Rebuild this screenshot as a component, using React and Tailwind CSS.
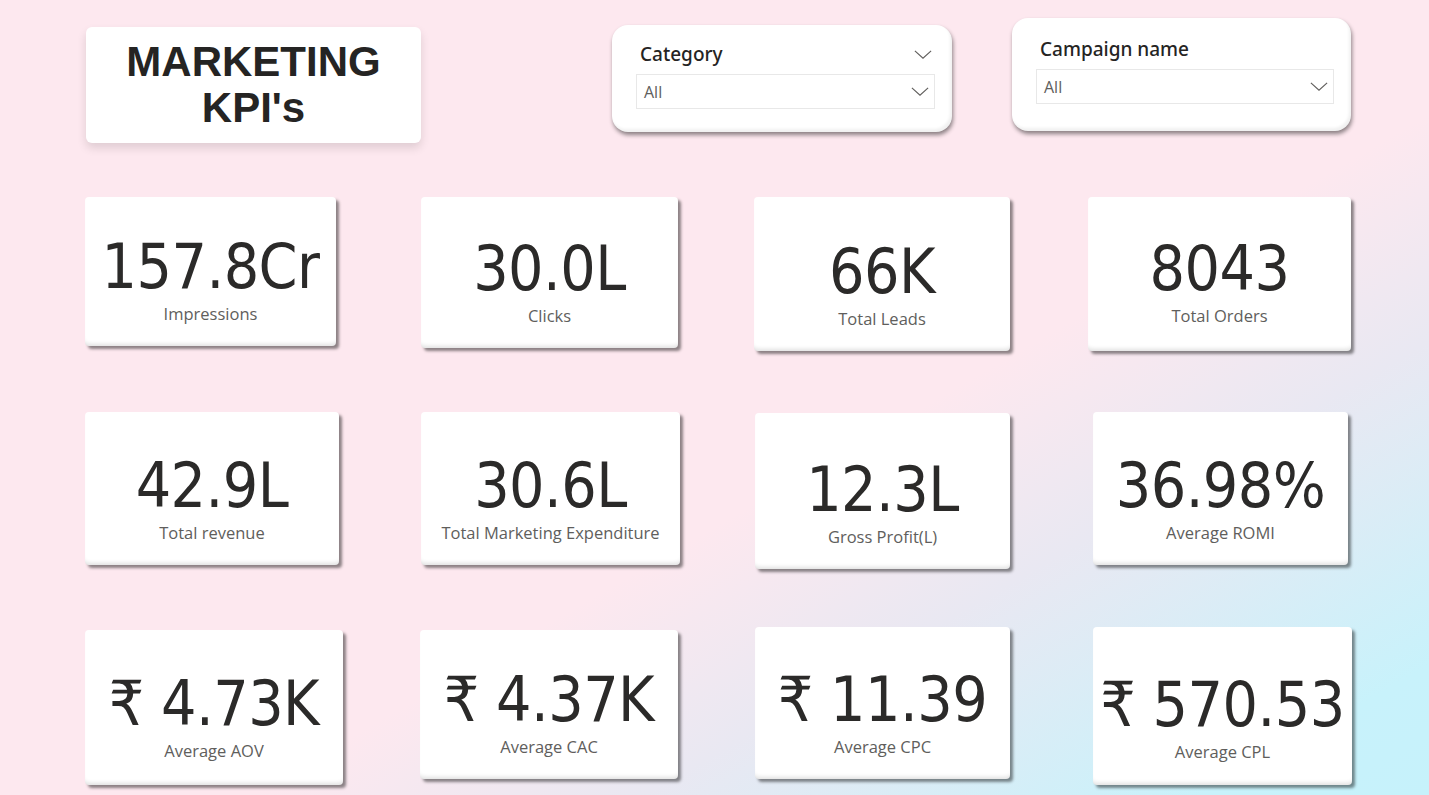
import React from 'react';

const valueFont = { fontFamily: "'DejaVu Sans Condensed', 'Liberation Sans Narrow', Roboto, sans-serif" };

// KPI cards, laid out by row. Offsets copied off the canvas so cards sit where the report has them.
const rows = [
    [
        { value: '157.8Cr', label: 'Impressions', box: 'w-[251px] h-[149px]', pad: 'pt-[39px]' },
        { value: '30.0L', label: 'Clicks', box: 'ml-[1px] w-[257px] h-[151px]', pad: 'pt-[41px]' },
        { value: '66K', label: 'Total Leads', box: 'w-[256px] h-[154px]', pad: 'pt-[44px]' },
        { value: '8043', label: 'Total Orders', box: 'ml-[1px] w-[263px] h-[154px]', pad: 'pt-[41px]' },
    ],
    [
        { value: '42.9L', label: 'Total revenue', box: 'w-[254px] h-[153px]', pad: 'pt-[43px]' },
        { value: '30.6L', label: 'Total Marketing Expenditure', box: 'ml-[1px] w-[259px] h-[153px]', pad: 'pt-[43px]' },
        { value: '12.3L', label: 'Gross Profit(L)', box: 'ml-[1px] mt-[1px] w-[255px] h-[156px]', pad: 'pt-[46px]' },
        { value: '36.98%', label: 'Average ROMI', box: 'ml-[6px] w-[255px] h-[153px]', pad: 'pt-[43px]' },
    ],
    [
        { value: '₹ 4.73K', label: 'Average AOV', box: 'mt-[3px] w-[258px] h-[155px]', pad: 'pt-[43px]' },
        { value: '₹ 4.37K', label: 'Average CAC', box: 'mt-[3px] w-[258px] h-[149px]', pad: 'pt-[39px]' },
        { value: '₹ 11.39', label: 'Average CPC', box: 'ml-[1px] w-[255px] h-[152px]', pad: 'pt-[42px]' },
        { value: '₹ 570.53', label: 'Average CPL', box: 'ml-[6px] w-[259px] h-[158px]', pad: 'pt-[47px]' },
    ],
];

const Chevron = ({ className }) => (
    <svg viewBox="0 0 20 10" className={className} fill="none" stroke="#605e5c" strokeWidth="1.3">
        <polyline points="1,1 10,9 19,1" />
    </svg>
);

const KpiCard = ({ value, label, box, pad }) => (
    <div className={`${box} ${pad} bg-white rounded-[4px] shadow-[3px_3px_3px_rgba(0,0,0,0.45),inset_0_-5px_4px_-3px_rgba(0,0,0,0.12)] flex flex-col items-center`}>
        <div style={valueFont} className="text-[62px] leading-[62px] text-[#2b2a29] tracking-[-0.5px] whitespace-nowrap">{value}</div>
        <div className="font-['Open_Sans',sans-serif] text-[16.5px] leading-[22px] text-[#605e5c] mt-[5px] whitespace-nowrap">{label}</div>
    </div>
);

const Slicer = ({ title, showTopChevron, box }) => (
    <div className={`${box} bg-white rounded-[16px] shadow-[1px_3px_4px_rgba(0,0,0,0.45),inset_-2px_-3px_3px_rgba(0,0,0,0.06)] pl-[24px] pr-[17px]`}>
        <div className="flex items-center justify-between pl-[4px] pr-[3px]">
            <span className="font-['Noto_Sans',sans-serif] font-medium text-[19px] leading-[28px] text-[#252423]">{title}</span>
            {showTopChevron && <Chevron className="w-[18px] h-[9px]" />}
        </div>
        <div className="mt-[6px] h-[35px] border border-[#e8e8e8] flex items-center justify-between pl-[7px] pr-[5px]">
            <span className="font-['Open_Sans',sans-serif] text-[16px] text-[#605e5c]">All</span>
            <Chevron className="w-[18px] h-[9px]" />
        </div>
    </div>
);

export default function App() {
    return (
        <div className="w-full h-[795px] overflow-hidden bg-[linear-gradient(150deg,#fde8ef_0%,#fde8ef_58%,#e9e8f2_72%,#c8f2fb_92%,#c6f2fb_100%)]">
            {/* header: title + slicers */}
            <div className="flex items-start pl-[86px]">
                <div className="mt-[27px] w-[335px] h-[116px] bg-white rounded-[6px] shadow-[0_5px_10px_rgba(0,0,0,0.12)] flex flex-col items-center justify-center">
                    <div className="font-['Liberation_Sans',Arial,sans-serif] font-bold text-[42px] leading-[46px] text-[#252423] text-center">
                        MARKETING<br />KPI's
                    </div>
                </div>
                <Slicer title="Category" showTopChevron box="ml-[191px] mt-[25px] w-[340px] h-[107px] pt-[15px]" />
                <Slicer title="Campaign name" box="ml-[60px] mt-[18px] w-[339px] h-[113px] pt-[17px]" />
            </div>

            {/* KPI grid */}
            <div className="flex flex-col gap-[65px] pl-[85px] mt-[54px]">
                {rows.map((row, i) => (
                    <div key={i} className="grid grid-cols-[335px_334px_333px_auto] items-start h-[150px]">
                        {row.map((c) => (
                            <KpiCard key={c.label} {...c} />
                        ))}
                    </div>
                ))}
            </div>
        </div>
    );
}
